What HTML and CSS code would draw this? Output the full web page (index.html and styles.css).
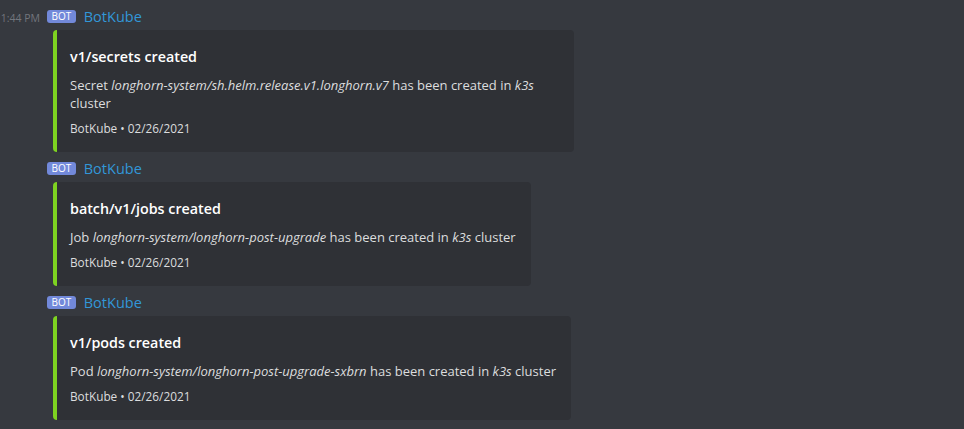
FILE: index.html
```html
<!DOCTYPE html>
<html lang="en">
<head>
  <meta charset="UTF-8" />
  <title>BotKube messages</title>
  <link rel="stylesheet" href="styles.css">
</head>
<body>

<div class="chat">

  <div class="message">
    <div class="header">
      <span class="time">1:44 PM</span>
      <span class="bot-tag">BOT</span>
      <span class="username">BotKube</span>
    </div>
    <div class="embed">
      <div class="embed-title">v1/secrets created</div>
      <div class="embed-desc">Secret <em>longhorn-system/sh.helm.release.v1.longhorn.v7</em> has been created in <em>k3s</em> cluster</div>
      <div class="embed-footer">BotKube • 02/26/2021</div>
    </div>
  </div>

  <div class="message">
    <div class="header">
      <span class="time"></span>
      <span class="bot-tag">BOT</span>
      <span class="username">BotKube</span>
    </div>
    <div class="embed">
      <div class="embed-title">batch/v1/jobs created</div>
      <div class="embed-desc">Job <em>longhorn-system/longhorn-post-upgrade</em> has been created in <em>k3s</em> cluster</div>
      <div class="embed-footer">BotKube • 02/26/2021</div>
    </div>
  </div>

  <div class="message">
    <div class="header">
      <span class="time"></span>
      <span class="bot-tag">BOT</span>
      <span class="username">BotKube</span>
    </div>
    <div class="embed">
      <div class="embed-title">v1/pods created</div>
      <div class="embed-desc">Pod <em>longhorn-system/longhorn-post-upgrade-sxbrn</em> has been created in <em>k3s</em> cluster</div>
      <div class="embed-footer">BotKube • 02/26/2021</div>
    </div>
  </div>

  <div class="message">
    <div class="header">
      <span class="time"></span>
      <span class="bot-tag">BOT</span>
      <span class="username">BotKube</span>
    </div>
  </div>

</div>

</body>
</html>
```

FILE: styles.css
```css
body {
  margin: 0;
  background: #36393f;
  font-family: "Open Sans", "Noto Sans", sans-serif;
  color: #dcddde;
  overflow: hidden;
}

.chat {
  padding-top: 6px;
}

.message {
  padding-bottom: 6px;
}

.header {
  display: flex;
  align-items: center;
  height: 20px;
}

.time {
  width: 40px;
  white-space: nowrap;
  text-align: right;
  font-size: 10.5px;
  color: #72767d;
  margin-right: 7px;
  margin-top: 4px;
}

.bot-tag {
  background: #7289da;
  color: #fff;
  font-size: 10px;
  line-height: 13px;
  height: 13px;
  padding: 0 4.5px;
  border-radius: 3px;
  margin-right: 8px;
}

.username {
  color: #3297d8;
  font-size: 14.5px;
  line-height: 20px;
  margin-top: 2px;
}

.embed {
  display: inline-block;
  max-width: 489px;
  margin: 4px 0 0 53px;
  background: #2f3136;
  border-left: 4px solid #7ed321;
  border-radius: 4px;
  padding: 8px 15px 16px 13px;
}

.embed-title {
  margin-top: 8px;
  color: #fff;
  font-weight: 600;
  font-size: 14.3px;
  line-height: 22px;
}

.embed-desc {
  margin-top: 8px;
  font-size: 13px;
  line-height: 18px;
}

.embed-desc em {
  font-style: italic;
}

.embed-footer {
  margin-top: 8px;
  font-size: 11.8px;
  line-height: 16px;
}
```
